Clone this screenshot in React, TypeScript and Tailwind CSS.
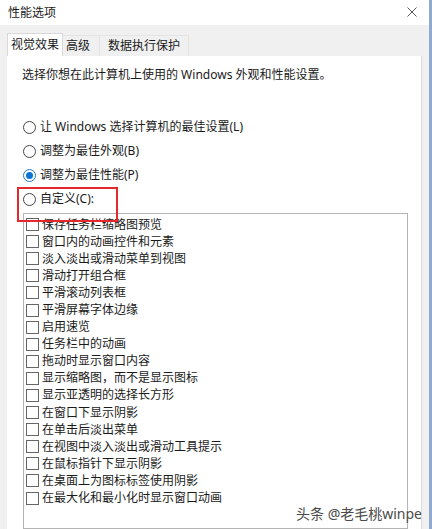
import { useState } from 'react';

const font = { fontFamily: '"Noto Sans", "Noto Sans CJK SC", sans-serif' };

const radios = [
  '让 Windows 选择计算机的最佳设置(L)',
  '调整为最佳外观(B)',
  '调整为最佳性能(P)',
  '自定义(C):',
];

const effects = [
  '保存任务栏缩略图预览',
  '窗口内的动画控件和元素',
  '淡入淡出或滑动菜单到视图',
  '滑动打开组合框',
  '平滑滚动列表框',
  '平滑屏幕字体边缘',
  '启用速览',
  '任务栏中的动画',
  '拖动时显示窗口内容',
  '显示缩略图，而不是显示图标',
  '显示亚透明的选择长方形',
  '在窗口下显示阴影',
  '在单击后淡出菜单',
  '在视图中淡入淡出或滑动工具提示',
  '在鼠标指针下显示阴影',
  '在桌面上为图标标签使用阴影',
  '在最大化和最小化时显示窗口动画',
];

export default function App() {
  const [choice, setChoice] = useState(2);
  const [checked, setChecked] = useState<boolean[]>(effects.map(() => false));

  return (
    <div
      className="relative flex w-[432px] h-[529px] overflow-hidden bg-white text-[12px] text-[#1a1a1a]"
      style={font}
    >
      <div className="flex flex-col w-[429px]">
        {/* Title bar */}
        <div className="flex items-center justify-between h-[25px] shrink-0 pl-[8px] pr-[12px] bg-white">
          <span className="leading-[16px]">性能选项</span>
          <svg width="10" height="10" viewBox="0 0 10 10" className="mt-[-2px]">
            <path d="M0.5 0.5 L9.5 9.5 M9.5 0.5 L0.5 9.5" stroke="#555" strokeWidth="1" />
          </svg>
        </div>

        {/* Tabs */}
        <div className="flex items-end h-[31px] shrink-0 bg-[#f0f0f0] pl-[7px]">
          <div className="flex items-center justify-center w-[56px] h-[23px] bg-white border border-b-0 border-[#d9d9d9] leading-[16px]">
            视觉效果
          </div>
          <div className="flex items-center h-[21px] pl-[3px] pr-[9px] border-t border-r border-[#e4e4e4] leading-[16px]">
            高级
          </div>
          <div className="flex items-center h-[21px] pl-[8px] pr-[8px] border-t border-r border-[#e4e4e4] leading-[16px]">
            数据执行保护
          </div>
        </div>

        {/* Body */}
        <div className="flex flex-1 bg-[#f0f0f0]">
          <div className="w-[7px] shrink-0" />
          <div className="flex flex-col w-[415px] bg-white border-r border-[#dadada]">
            <p className="mt-[11px] pl-[15px] h-[16px] leading-[16px]">
              选择你想在此计算机上使用的 Windows 外观和性能设置。
            </p>

            <div className="flex flex-col mt-[32px] pl-[16px]">
              {radios.map((label, i) => (
                <button
                  key={label}
                  onClick={() => setChoice(i)}
                  className="flex items-center gap-[4px] h-[24px] text-left"
                >
                  <span
                    className={
                      'flex items-center justify-center w-[13px] h-[13px] rounded-full border ' +
                      (choice === i ? 'border-[#2a79c4]' : 'border-[#444]')
                    }
                  >
                    {choice === i && <span className="w-[7px] h-[7px] rounded-full bg-[#0a74d6]" />}
                  </span>
                  <span className="leading-[16px]">{label}</span>
                </button>
              ))}
            </div>

            {/* Effects list */}
            <div className="ml-[16px] mt-[2px] w-[385px] flex-1 border border-[#b4b4b4] pt-[2px] pl-[2px]">
              {effects.map((label, i) => (
                <label key={label} className="flex items-center gap-[3px] h-[17.1px]">
                  <input
                    type="checkbox"
                    checked={checked[i]}
                    onChange={() =>
                      setChecked(checked.map((c, j) => (j === i ? !c : c)))
                    }
                    className="appearance-none w-[13px] h-[13px] border border-[#666] bg-white shrink-0"
                  />
                  <span className="leading-[16px]">{label}</span>
                </label>
              ))}
            </div>
          </div>
          <div className="w-[7px] shrink-0" />
        </div>
      </div>
      <div className="w-[3px] bg-[#8fa9cf]" />

      {/* Highlight box */}
      <div className="absolute left-[17px] top-[187px] w-[101px] h-[35px] border-2 border-[#e5282c]" />

      {/* Watermark */}
      <div
        className="absolute right-[10px] bottom-[7px] text-[14px] leading-[16px] text-[#4a4a4a]"
        style={{ textShadow: '0 0 2px #fff, 0 0 2px #fff' }}
      >
        头条 @老毛桃winpe
      </div>
    </div>
  );
}
